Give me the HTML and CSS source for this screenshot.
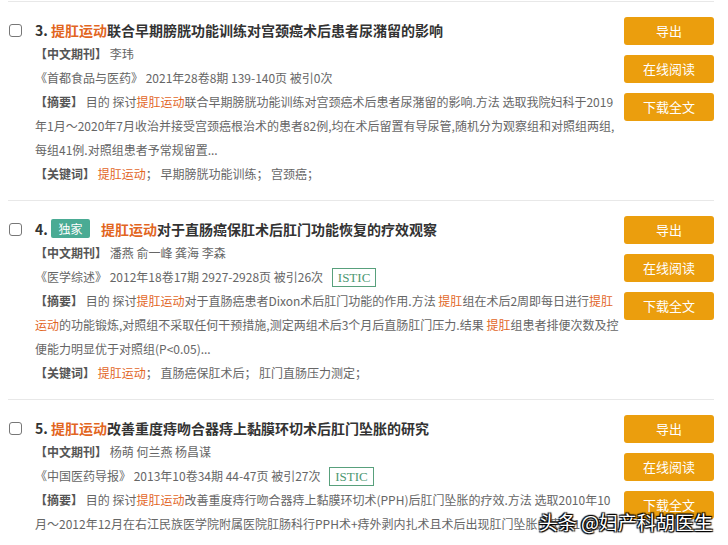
FILE: index.html
```html
<!DOCTYPE html>
<html>
	<head>
		<meta charset="UTF-8">
		<title>检索结果</title>
		<link rel="stylesheet" href="styles.css">
	</head>
	<body>
		<div class="result-list">
			<div class="result-item">
				<span class="check"></span>
				<div class="result-main">
					<p class="result-title">3. <em class="hl">提肛运动</em>联合早期膀胱功能训练对宫颈癌术后患者尿潴留的影响</p>
					<p class="line"><b class="label">【中文期刊】</b> 李玮</p>
					<p class="line">《首都食品与医药》 2021年28卷8期 139-140页 被引0次</p>
					<p class="line"><b class="label">【摘要】</b> 目的 探讨<em class="hl">提肛运动</em>联合早期膀胱功能训练对宫颈癌术后患者尿潴留的影响.方法 选取我院妇科于2019<br>年1月～2020年7月收治并接受宫颈癌根治术的患者82例,均在术后留置有导尿管,随机分为观察组和对照组两组,<br>每组41例.对照组患者予常规留置...</p>
					<p class="line"><b class="label">【关键词】</b> <em class="hl">提肛运动</em>； 早期膀胱功能训练； 宫颈癌；</p>
				</div>
				<div class="result-btns">
					<a class="btn">导出</a>
					<a class="btn">在线阅读</a>
					<a class="btn">下载全文</a>
				</div>
			</div>
			<div class="result-item">
				<span class="check"></span>
				<div class="result-main">
					<p class="result-title">4. <span class="tag">独家</span><em class="hl">提肛运动</em>对于直肠癌保肛术后肛门功能恢复的疗效观察</p>
					<p class="line"><b class="label">【中文期刊】</b> 潘燕 俞一峰 龚海 李森</p>
					<p class="line">《医学综述》 2012年18卷17期 2927-2928页 被引26次 <span class="istic">ISTIC</span></p>
					<p class="line"><b class="label">【摘要】</b> 目的 探讨<em class="hl">提肛运动</em>对于直肠癌患者Dixon术后肛门功能的作用.方法 <em class="hl">提肛</em>组在术后2周即每日进行<em class="hl">提肛</em><br><em class="hl">运动</em>的功能锻炼,对照组不采取任何干预措施,测定两组术后3个月后直肠肛门压力.结果 <em class="hl">提肛</em>组患者排便次数及控<br>便能力明显优于对照组(P&lt;0.05)...</p>
					<p class="line"><b class="label">【关键词】</b> <em class="hl">提肛运动</em>； 直肠癌保肛术后； 肛门直肠压力测定；</p>
				</div>
				<div class="result-btns">
					<a class="btn">导出</a>
					<a class="btn">在线阅读</a>
					<a class="btn">下载全文</a>
				</div>
			</div>
			<div class="result-item">
				<span class="check"></span>
				<div class="result-main">
					<p class="result-title">5. <em class="hl">提肛运动</em>改善重度痔吻合器痔上黏膜环切术后肛门坠胀的研究</p>
					<p class="line"><b class="label">【中文期刊】</b> 杨萌 何兰燕 杨昌谋</p>
					<p class="line">《中国医药导报》 2013年10卷34期 44-47页 被引27次 <span class="istic">ISTIC</span></p>
					<p class="line"><b class="label">【摘要】</b> 目的 探讨<em class="hl">提肛运动</em>改善重度痔行吻合器痔上黏膜环切术(PPH)后肛门坠胀的疗效.方法 选取2010年10<br>月～2012年12月在右江民族医学院附属医院肛肠科行PPH术+痔外剥内扎术且术后出现肛门坠胀的患者100例</p>
				</div>
				<div class="result-btns">
					<a class="btn">导出</a>
					<a class="btn">在线阅读</a>
					<a class="btn">下载全文</a>
				</div>
			</div>
		</div>
		<div class="mark">头条 @妇产科胡医生</div>
	</body>
</html>
```

FILE: styles.css
```css
*{margin:0;padding:0;}
html,body{height:100%;overflow:hidden;}
body{
	background:#fff;
	font-family:"Noto Sans CJK SC","Liberation Sans",sans-serif;
	font-size:12px;
	color:#666;
	position:relative;
}
.result-list{
	padding:1px 14px 0 8px;
}
.result-item{
	display:flex;
	border-top:1px solid #e8e8e8;
	padding:16px 0 14px;
}
.check{
	flex:none;
	width:11px;
	height:11px;
	border:1px solid #777;
	border-radius:3px;
	margin:6px 0 0 1px;
}
.result-main{
	flex:1;
	padding-left:13px;
	min-width:0;
}
.result-title{
	font-size:14px;
	font-weight:bold;
	color:#333;
	line-height:24px;
	white-space:nowrap;
}
.hl{
	font-style:normal;
	color:#e2661f;
}
.result-title .hl{font-weight:bold;}
.tag{
	display:inline-block;
	width:39px;
	height:19px;
	line-height:19px;
	background:#4aab94;
	color:#fff;
	font-size:12px;
	font-weight:normal;
	text-align:center;
	border-radius:2px;
	margin:0 11px 0 0;
	vertical-align:1px;
}
.line{
	line-height:24px;
	white-space:nowrap;
}
.label{
	color:#555;
	font-weight:bold;
}
.istic{
	display:inline-block;
	border:1px solid #58a07c;
	color:#4d9872;
	line-height:17px;
	padding:0 5px;
	margin-left:6px;
	font-family:"Liberation Serif",serif;
	font-size:13px;
}
.result-btns{
	flex:none;
	width:90px;
	display:flex;
	flex-direction:column;
	gap:10px;
	margin:-1px 0 0 8px;
}
.btn{
	display:block;
	height:28px;
	line-height:28px;
	background:#eb9e0d;
	color:#fff;
	text-align:center;
	font-size:13px;
	border-radius:3px;
}
.mark{
	position:absolute;
	right:15px;
	bottom:10px;
	font-size:19px;
	color:#fff;
	text-shadow:0 0 2px #000,1px 1px 1px #000,-1px -1px 1px #000,1px -1px 1px #000,-1px 1px 1px #000;
}
```
